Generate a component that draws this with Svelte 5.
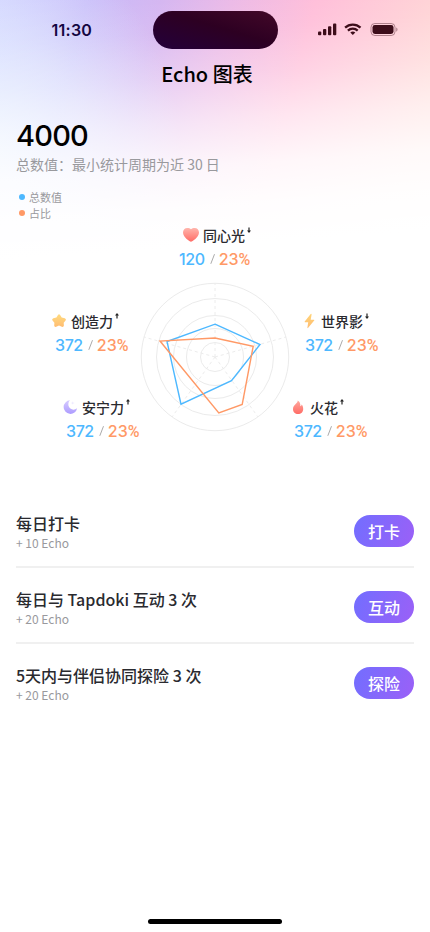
<script>
  // left/top are offsets inside the chart section
  const stats = [
    { name: "同心光", icon: "heart", value: 120, trend: "down", left: 179, top: 4, indent: 0 },
    { name: "世界影", icon: "bolt", value: 372, trend: "down", left: 297, top: 90, indent: 8 },
    { name: "火花", icon: "flame", value: 372, trend: "up", left: 286, top: 176, indent: 8 },
    { name: "安宁力", icon: "moon", value: 372, trend: "up", left: 58, top: 176, indent: 8 },
    { name: "创造力", icon: "star", value: 372, trend: "up", left: 47, top: 90, indent: 8 },
  ];

  const tasks = [
    { title: "每日打卡", reward: "+ 10 Echo", action: "打卡" },
    { title: "每日与 Tapdoki 互动 3 次", reward: "+ 20 Echo", action: "互动" },
    { title: "5天内与伴侣协同探险 3 次", reward: "+ 20 Echo", action: "探险" },
  ];

  const rings = [14.5, 28.5, 41.5, 58.5, 73.7];
  const spokes = [[0, -74], [71, -20], [43, 60], [-43, 60], [-71, -20]];
  const totals = "0,-32.8 45,-12.5 16.5,23.6 -34,47.2 -48,-15.5";
  const shares = "0,-19 38.2,-10.8 27.2,47.5 3.8,56 -55,-16";
</script>

<div class="screen">
  <header class="status">
    <span class="time">11:30</span>
    <div class="island"></div>
    <div class="indicators">
      <svg width="80" height="14" viewBox="0 0 80 14" fill="#3d0d1a">
        <rect x="0" y="8.5" width="3.3" height="3.8" rx="1" />
        <rect x="5" y="6" width="3.3" height="6.3" rx="1" />
        <rect x="10" y="3.2" width="3.3" height="9.1" rx="1" />
        <rect x="15" y="0.5" width="3.3" height="11.8" rx="1" />
        <g fill="none" stroke="#3d0d1a" stroke-width="2.3">
          <path d="M27.1 4.6a11.3 11.3 0 0 1 15.4 0" />
          <path d="M29.9 7.6a7.2 7.2 0 0 1 9.8 0" />
        </g>
        <path d="M34.8 12.1l-2.5-2.5a3.8 3.8 0 0 1 5 0z" />
        <rect x="53" y="0.5" width="24" height="12" rx="3.8" fill="none" stroke="#3d0d1a" stroke-opacity=".4" />
        <rect x="54.5" y="2" width="21" height="9" rx="2.4" />
        <path d="M78.2 4.5v4.2c1.800-.7 1.800-3.500 0-4.200z" opacity=".4" />
      </svg>
    </div>
  </header>

  <h1>Echo 图表</h1>

  <section class="summary">
    <div class="total">4000</div>
    <p>总数值：最小统计周期为近 30 日</p>
    <ul class="legend">
      <li><i class="dot blue"></i>总数值</li>
      <li><i class="dot orange"></i>占比</li>
    </ul>
  </section>

  <section class="chart">
    <svg class="radar" width="150" height="150" viewBox="-75 -75 150 150" fill="none">
      {#each rings as r}
        <circle {r} stroke="#ebebeb" />
      {/each}
      {#each spokes as [x, y]}
        <line x2={x} y2={y} stroke="#ececec" stroke-dasharray="3 3" />
      {/each}
      <polygon points={totals} stroke="#4db8ff" stroke-width="1.4" />
      <polygon points={shares} stroke="#ff9966" stroke-width="1.4" />
    </svg>

    {#each stats as stat}
      <div class="stat" style="left: {stat.left}px; top: {stat.top}px">
        <div class="name {stat.icon}">
          <svg class="icon" viewBox="0 0 18 18">
            <defs>
              <linearGradient id="g-{stat.icon}" x1="0" y1="0" x2="0" y2="1">
                <stop class="from" offset="0" />
                <stop class="to" offset="1" />
              </linearGradient>
            </defs>
            <g fill="url(#g-{stat.icon})">
              {#if stat.icon === "heart"}
                <path d="M9 15.800C8 15.800 1 11.200 1 6.500C1 3.800 2.900 2 5.200 2C6.900 2 8.200 2.500 9 3.300C9.800 2.500 11.100 2 12.800 2C15.100 2 17 3.800 17 6.500C17 11.200 10 15.800 9 15.800Z" />
              {:else if stat.icon === "bolt"}
                <path d="M10.700 2L4.700 9.500Q4.400 10.100 5 10.200L8.200 10.200L7.400 15.700Q7.500 16.500 8.200 15.800L14.200 8.600Q14.700 7.900 13.900 7.800L10.700 7.800L11.600 2.600Q11.500 1.300 10.700 2Z" />
              {:else if stat.icon === "flame"}
                <path d="M8.700 2.400C9 5.100 4 6.700 4 11C4 14.200 6.200 16 9 16C12 16 14.200 14.100 14.200 11C14.200 9 13.500 7.500 12.700 6.600C12.400 7.600 12 8.200 11.300 8.300C11.600 5.600 10.700 3.400 8.700 2.400Z" />
              {:else if stat.icon === "moon"}
                <path d="M9 2.300A6.800 6.800 0 1 0 16.100 10.300C13 12.900 8.400 11.500 7.500 7.800C7 5.500 7.700 3.500 9 2.300Z" />
                <path d="M11.700 3.200l.5 1.200 1.300.5-1.300.5-.5 1.200-.5-1.200-1.300-.5 1.300-.5z" opacity=".3" />
              {:else}
                <path d="M8 3Q9 1.500 10.100 3L11.700 5.500L14.800 6.200Q16.700 6.900 15.600 8.500L13.700 10.700L13.900 13.600Q13.600 15.400 11.800 14.800L9 13.600L6.200 14.800Q4.400 15.400 4.200 13.600L4.400 10.700L2.500 8.500Q1.400 6.900 3.300 6.200L6.400 5.500Z" />
              {/if}
            </g>
          </svg>
          <span>{stat.name}</span>
          <svg class="trend" class:down={stat.trend === "down"} width="4" height="6" viewBox="0 0 4 6">
            <path d="M2 0L4 2.500H2.600V5.500H1.400V2.500H0Z" fill="#222" />
          </svg>
        </div>
        <div class="numbers" style="padding-left: {stat.indent}px">
          <b class="value">{stat.value}</b>
          <svg class="slash" width="5" height="12" viewBox="0 0 5 12"><path d="M4.500 1.200L.8 10.800" stroke="#aaa" /></svg>
          <b class="share">23<span class="percent">%</span></b>
        </div>
      </div>
    {/each}
  </section>

  <ul class="tasks">
    {#each tasks as task}
      <li>
        <div class="copy">
          <h2>{task.title}</h2>
          <small>{task.reward}</small>
        </div>
        <button>{task.action}</button>
      </li>
    {/each}
  </ul>

  <div class="home"></div>
</div>

<style>
  .screen {
    display: flex;
    flex-direction: column;
    box-sizing: border-box;
    width: 430px;
    height: 932px;
    overflow: hidden;
    color: #2a2a2f;
    font-family: "Noto Sans CJK SC", sans-serif;
    background:
      linear-gradient(176deg, rgba(255, 255, 255, 0) 0, rgba(255, 255, 255, 0.1) 45px, rgba(255, 255, 255, 0.32) 90px, rgba(255, 255, 255, 0.62) 135px, rgba(255, 255, 255, 0.87) 180px, rgba(255, 255, 255, 0.97) 220px, #fff 260px) 0 0 / 100% 280px no-repeat,
      radial-gradient(ellipse 190px 220px at -10px 150px, rgba(228, 240, 255, 0.95), rgba(228, 240, 255, 0.55) 50%, rgba(228, 240, 255, 0)) 0 0 / 100% 280px no-repeat,
      linear-gradient(105deg, #cfceff 0, #c8bbf9 85px, #d4b5f1 155px, #ebb8e6 225px, #ffbcd8 305px, #ffd5d3 440px) 0 0 / 100% 280px no-repeat,
      #fff;
  }

  .status {
    display: grid;
    grid-template-columns: 1fr 125px 1fr;
    height: 37px;
    margin-top: 11px;
  }

  .time {
    padding-left: 51.5px;
    font: 600 16px/38px Inter, sans-serif;
    letter-spacing: 0.25px;
    color: #140641;
  }

  .island {
    border-radius: 19px;
    background: linear-gradient(to top right, #23003b, #2d0022 55%, #430828);
  }

  .indicators {
    padding: 12px 0 0 40px;
  }

  .indicators svg {
    display: block;
  }

  h1 {
    margin: 11px 0 0;
    padding-right: 16px;
    font-size: 20px;
    line-height: 30px;
    font-weight: 500;
    text-align: center;
    color: #000;
  }

  .summary {
    height: 131px;
    padding: 0 16px;
  }

  .total {
    margin-top: 29px;
    font: 500 29px/36px Inter, sans-serif;
    letter-spacing: -0.8px;
    color: #000;
  }

  .summary p {
    margin: 0;
    font-size: 14px;
    line-height: 20px;
    font-weight: 400;
    color: #99999d;
  }

  ul {
    margin: 0;
    padding: 0;
    list-style: none;
  }

  .legend {
    margin: 15px 0 0 3px;
    font-size: 11px;
    line-height: 16px;
    font-weight: 400;
    color: #99999d;
  }

  .legend li {
    display: flex;
    align-items: center;
    gap: 4px;
  }

  .dot {
    width: 6px;
    height: 6px;
    border-radius: 50%;
  }

  .blue {
    background: #4db8ff;
  }

  .orange {
    background: #ff9966;
  }

  .chart {
    position: relative;
    flex: none;
    height: 272px;
  }

  .radar {
    position: absolute;
    left: 140px;
    top: 62px;
  }

  .stat {
    position: absolute;
  }

  .name {
    display: flex;
    align-items: center;
    height: 22px;
    padding-left: 3px;
    font-size: 14px;
    font-weight: 500;
    white-space: nowrap;
  }

  .icon {
    width: 18px;
    height: 18px;
    margin-right: 3px;
  }

  .trend {
    align-self: flex-start;
    margin: 3px 0 0 2px;
  }

  .trend.down {
    transform: rotate(180deg);
  }

  .numbers {
    display: flex;
    align-items: center;
    height: 26px;
    font-family: Inter, sans-serif;
    font-size: 16px;
    letter-spacing: -0.4px;
  }

  .numbers b {
    font-weight: 500;
  }

  .slash {
    margin: 0 4px 0 5px;
  }

  .value {
    color: #4db8ff;
  }

  .share {
    color: #ff9966;
    letter-spacing: 0;
  }

  .percent {
    font-family: Roboto, sans-serif;
  }

  .heart { --from: #ffb5ac; --to: #ff6b65; }
  .bolt { --from: #ffd478; --to: #ffbd72; }
  .flame { --from: #ffaaa0; --to: #ff6b65; }
  .moon { --from: #d6cbff; --to: #ad9cff; }
  .star { --from: #ffdb7f; --to: #ffbd72; }

  .from {
    stop-color: var(--from);
  }

  .to {
    stop-color: var(--to);
  }

  .tasks {
    margin: 0 16px;
  }

  .tasks li {
    display: flex;
    align-items: center;
    justify-content: space-between;
    box-sizing: border-box;
    height: 76px;
    padding-top: 4px;
    border-bottom: 2px solid #f0f0f0;
  }

  .tasks li:last-child {
    border-color: transparent;
  }

  h2 {
    margin: 0;
    font-size: 16px;
    line-height: 24px;
    font-weight: 500;
  }

  small {
    display: block;
    margin: -1px 0 1px;
    font-size: 12px;
    line-height: 17px;
    font-weight: 400;
    color: #99999d;
  }

  button {
    width: 60px;
    height: 32px;
    padding: 0;
    border: 0;
    border-radius: 16px;
    font: 500 16px/32px "Noto Sans CJK SC", sans-serif;
    color: #fff;
    background: linear-gradient(110deg, #726eff, #9b60f7);
  }

  .home {
    width: 134px;
    height: 5px;
    margin: auto auto 8px;
    border-radius: 3px;
    background: #000;
  }
</style>
